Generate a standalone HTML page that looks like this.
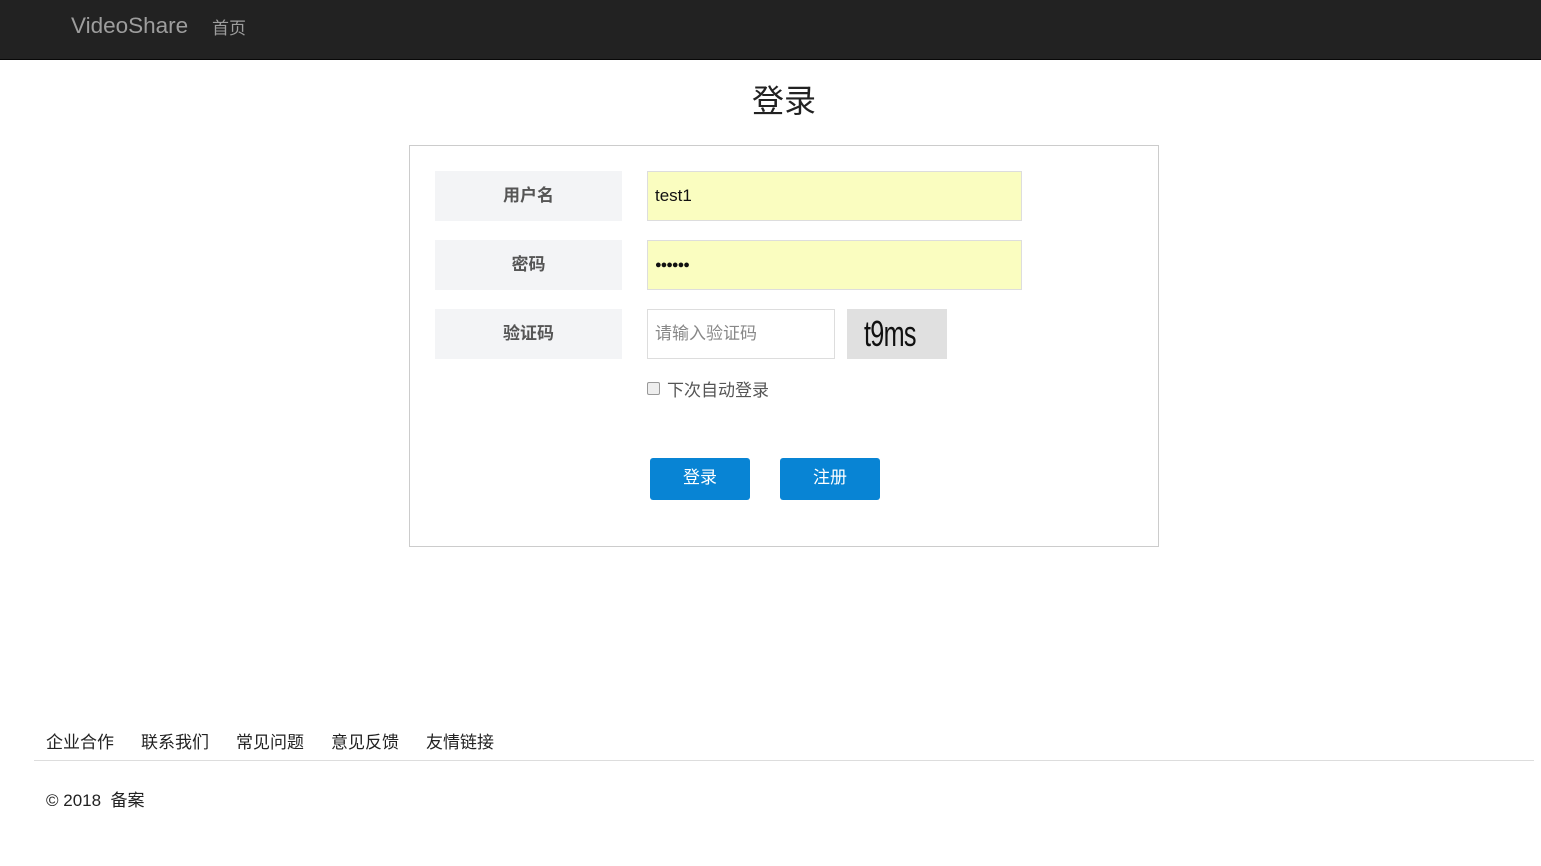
<!DOCTYPE html>
<html><head><meta charset="utf-8"><style>
*{box-sizing:border-box;margin:0;padding:0}
body{width:1541px;height:866px;background:#fff;font-family:"Liberation Sans","Noto Sans CJK SC",sans-serif;color:#333;position:relative;overflow:hidden}
.nav{position:absolute;left:0;top:0;width:1541px;height:60px;background:#222;border-bottom:1px solid #080808}
.brand{position:absolute;left:71px;top:13px;font-size:22.5px;color:#9d9d9d}
.home{position:absolute;left:212px;top:14px;font-size:17px;color:#9d9d9d}
h2{position:absolute;left:0;width:1568px;top:76px;text-align:center;font-size:32px;font-weight:normal;color:#222}
.box{position:absolute;left:409px;top:145px;width:750px;height:402px;border:1px solid #ccc}
.lab{position:absolute;left:435px;width:187px;height:50px;background:#f3f4f6;font-weight:bold;font-size:17px;color:#555;text-align:center;line-height:50px}
.inp{position:absolute;left:647px;height:50px;border:1px solid #ddd;font-size:17px;line-height:48px;padding-left:7px;color:#111}
.y{background:#fafdc0;width:375px}
.cap{position:absolute;left:864px;top:309px;height:50px;font-size:36px;color:#111;line-height:50px;transform:scaleX(0.7);transform-origin:left;letter-spacing:-1px}
.capbg{position:absolute;left:847px;top:309px;width:100px;height:50px;background:#e0e0e0}
.chk{position:absolute;left:647px;top:382px;width:13px;height:13px;border:1px solid #999;border-radius:2px;background:#eee}
.ct{position:absolute;left:667px;top:376px;font-size:17px;color:#555}
.btn{position:absolute;top:458px;width:100px;height:42px;background:#0884d4;border-radius:3px;color:#fff;font-size:17px;text-align:center;line-height:40px}
.foot{position:absolute;top:728px;font-size:17px;color:#222}
.hr{position:absolute;left:34px;top:760px;width:1500px;border-top:1px solid #ddd}
</style></head><body>
<div class="nav"><div class="brand">VideoShare</div><div class="home">首页</div></div>
<h2>登录</h2>
<div class="box"></div>
<div class="lab" style="top:171px">用户名</div>
<div class="lab" style="top:240px">密码</div>
<div class="lab" style="top:309px">验证码</div>
<div class="inp y" style="top:171px">test1</div>
<div class="inp y" style="top:240px;font-size:11px;letter-spacing:-1px;font-weight:bold">●●●●●●</div>
<div class="inp" style="top:309px;width:188px;color:#888">请输入验证码</div>
<div class="capbg"></div><div class="cap">t9ms</div>
<div class="chk"></div><div class="ct">下次自动登录</div>
<div class="btn" style="left:650px">登录</div>
<div class="btn" style="left:780px">注册</div>
<div class="foot" style="left:46px">企业合作</div>
<div class="foot" style="left:141px">联系我们</div>
<div class="foot" style="left:236px">常见问题</div>
<div class="foot" style="left:331px">意见反馈</div>
<div class="foot" style="left:426px">友情链接</div>
<div class="hr"></div>
<div class="foot" style="left:46px;top:786px">© 2018&nbsp; 备案</div>
</body></html>
